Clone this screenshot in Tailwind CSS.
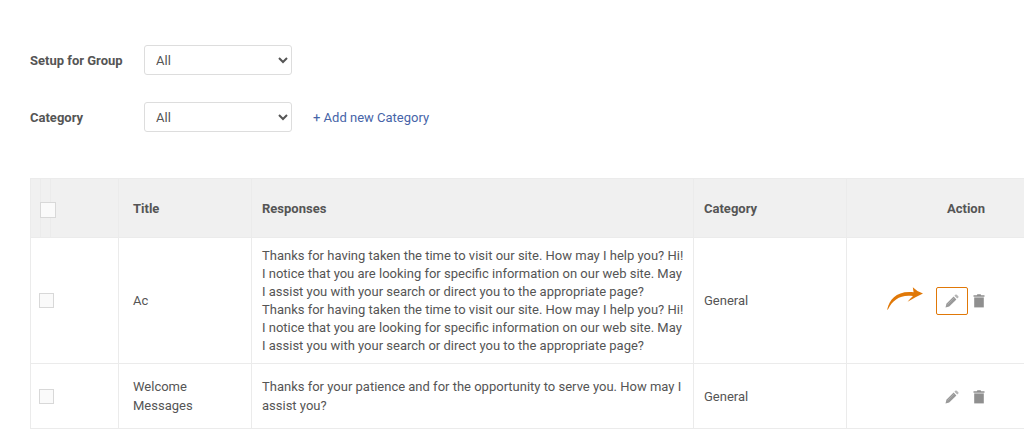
<!DOCTYPE html>
<html lang="en">
<head>
    <meta charset="UTF-8">
    <meta name="viewport" content="width=device-width, initial-scale=1.0">
    <title>Canned Responses</title>
    <script src="https://cdn.jsdelivr.net/npm/@tailwindcss/browser@4"></script>
</head>
<body class="bg-white font-[Roboto,sans-serif] text-[13px] leading-[19px] text-[#555] overflow-x-hidden">
    <svg class="hidden">
        <symbol id="pencil" viewBox="0 0 14 14">
            <path d="M0.5 13.5 L1.4 9.8 L8.6 2.6 L11.4 5.4 L4.2 12.6 Z" fill="#999" />
            <path d="M9.4 1.8 L10.6 0.6 Q11.2 0.2 11.8 0.7 L13.3 2.2 Q13.8 2.8 13.4 3.4 L12.2 4.6 Z" fill="#b5b5b5" />
            <path d="M2.6 10.4 L9 4" stroke="#bbb" stroke-width="0.6" />
        </symbol>
        <symbol id="trash" viewBox="0 0 12 14">
            <path d="M0.5 1.2 H3.8 L4.4 0.3 H7.6 L8.2 1.2 H11.5 V2.8 H0.5 Z" fill="#8f8f8f" />
            <path d="M1.2 3.4 H10.8 V13.4 H1.2 Z" fill="#8f8f8f" />
        </symbol>
    </svg>

    <form class="pl-[30px] pt-[45px] flex flex-col gap-[27px]">
        <div class="flex items-center">
            <label for="group" class="w-[114px] font-bold">Setup for Group</label>
            <select id="group" class="w-[148px] h-[30px] pl-[7px] bg-white border border-[#ddd] rounded-[3px]">
                <option>All</option>
            </select>
        </div>
        <div class="flex items-center">
            <label for="category" class="w-[114px] font-bold">Category</label>
            <select id="category" class="w-[148px] h-[30px] pl-[7px] bg-white border border-[#ddd] rounded-[3px]">
                <option>All</option>
            </select>
            <a href="#" class="ml-[21px] text-[#4664a8]">+ Add new Category</a>
        </div>
    </form>

    <div class="mt-[46px] pl-[30px]">
        <table class="w-full table-fixed border-collapse text-left">
            <colgroup>
                <col class="w-[88px]">
                <col class="w-[133px]">
                <col class="w-[442px]">
                <col class="w-[153px]">
                <col>
            </colgroup>
            <thead class="bg-[#f0f0f0]">
                <tr class="h-[59px]">
                    <th class="border border-[#ebebeb] p-0">
                        <div class="ml-[9px] w-[11px] h-[58px] border-x border-[#ebebeb] flex items-center">
                            <input type="checkbox" aria-label="Select all" class="-ml-px mt-[3px] shrink-0 appearance-none w-4 h-4 bg-[#fafafa] border border-[#d8d8d8]">
                        </div>
                    </th>
                    <th class="border border-[#ebebeb] pl-[14px]">Title</th>
                    <th class="border border-[#ebebeb] pl-[10px]">Responses</th>
                    <th class="border border-[#ebebeb] pl-[10px]">Category</th>
                    <th class="border-y border-[#ebebeb] pl-[100px]">Action</th>
                </tr>
            </thead>
            <tbody>
                <tr class="h-[126px]">
                    <td class="border border-[#ebebeb] pl-2">
                        <input type="checkbox" aria-label="Select Ac" class="block appearance-none w-[15px] h-[15px] bg-[#fafafa] border border-[#d8d8d8]">
                    </td>
                    <td class="border border-[#ebebeb] pl-[14px]">Ac</td>
                    <td class="border border-[#ebebeb] pl-[10px] pr-2 leading-[18px]">Thanks for having taken the time to visit our site. How may I help you? Hi! I notice that you are looking for specific information on our web site. May I assist you with your search or direct you to the appropriate page?<br>Thanks for having taken the time to visit our site. How may I help you? Hi! I notice that you are looking for specific information on our web site. May I assist you with your search or direct you to the appropriate page?</td>
                    <td class="border border-[#ebebeb] pl-[10px]">General</td>
                    <td class="border-y border-[#ebebeb] pl-[40px] pt-px">
                        <div class="flex items-center">
                            <svg class="w-[37px] h-[24px] mr-[12px] mb-1" viewBox="0 0 37 24">
                                <path d="M0.2 22.6 C2.5 12 10 3.4 26.6 5.2 L25.8 0.2 Q30 4.6 36 6.6 Q29.4 9.6 20.6 14.8 Q23.2 11.6 26 9 C14 7.2 5.6 12.4 0.8 22.8 Z" fill="#e07808" />
                            </svg>
                            <button type="button" aria-label="Edit" class="w-8 h-[28px] border border-[#e07808] rounded-[2px] flex items-center justify-center">
                                <svg class="w-[14px] h-[14px]"><use href="#pencil" /></svg>
                            </button>
                            <button type="button" aria-label="Delete" class="ml-[5px]">
                                <svg class="w-[12px] h-[14px]"><use href="#trash" /></svg>
                            </button>
                        </div>
                    </td>
                </tr>
                <tr class="h-[65px]">
                    <td class="border border-[#ebebeb] pl-2">
                        <input type="checkbox" aria-label="Select Welcome Messages" class="block appearance-none w-[15px] h-[15px] bg-[#fafafa] border border-[#d8d8d8]">
                    </td>
                    <td class="border border-[#ebebeb] pl-[14px] pr-6">Welcome Messages</td>
                    <td class="border border-[#ebebeb] pl-[10px] pr-2">Thanks for your patience and for the opportunity to serve you. How may I assist you?</td>
                    <td class="border border-[#ebebeb] pl-[10px]">General</td>
                    <td class="border-y border-[#ebebeb] pl-[89px] pt-px">
                        <div class="flex items-center">
                            <button type="button" aria-label="Edit" class="w-8 h-[28px] flex items-center justify-center">
                                <svg class="w-[14px] h-[14px]"><use href="#pencil" /></svg>
                            </button>
                            <button type="button" aria-label="Delete" class="ml-[5px]">
                                <svg class="w-[12px] h-[14px]"><use href="#trash" /></svg>
                            </button>
                        </div>
                    </td>
                </tr>
            </tbody>
        </table>
    </div>
</body>
</html>
